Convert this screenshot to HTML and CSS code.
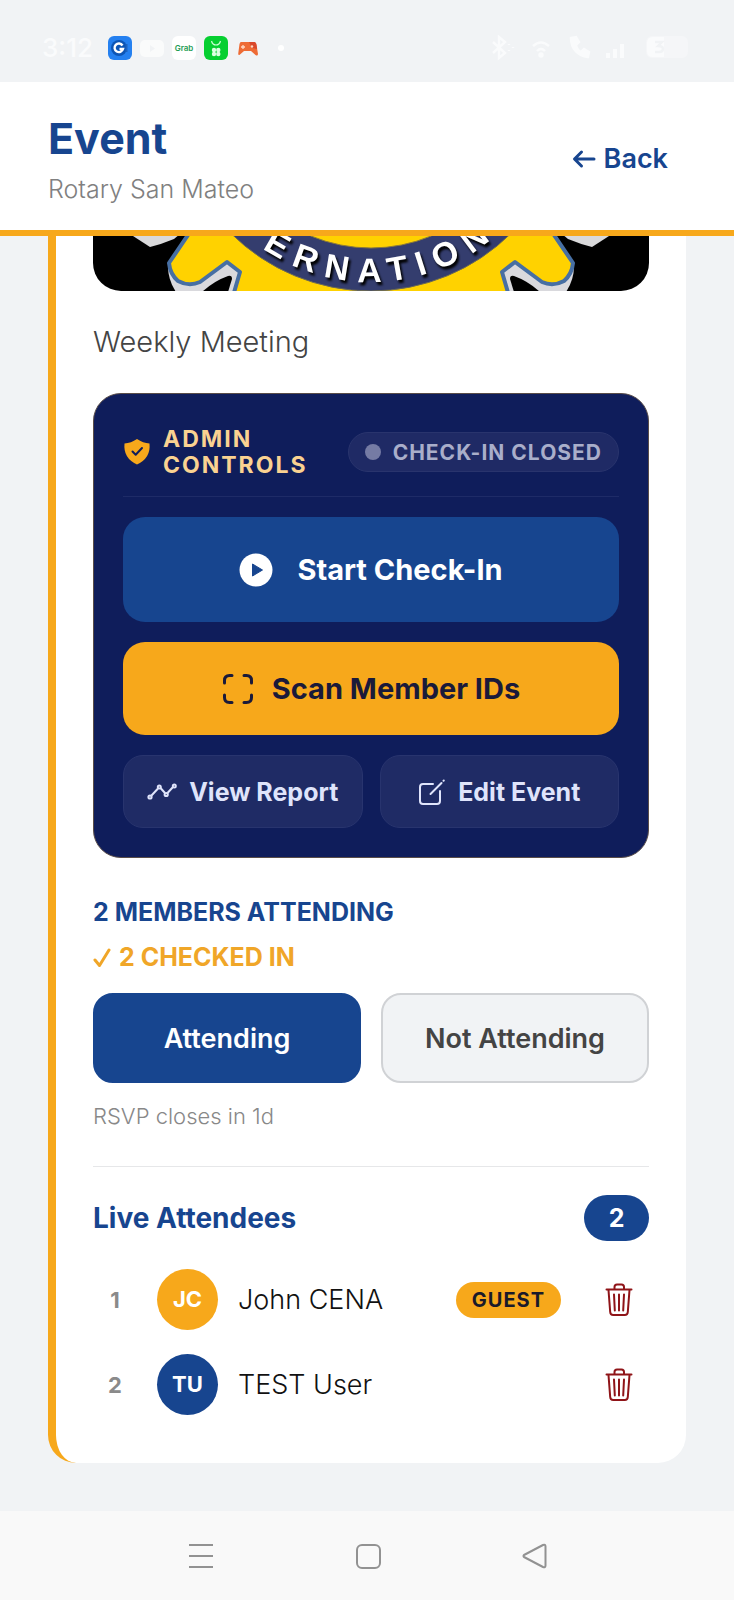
FILE: index.html
```html
<!DOCTYPE html>
<html lang="en">
<head>
    <meta charset="UTF-8">
    <meta name="viewport" content="width=device-width, initial-scale=1.0">
    <title>Event - Rotary San Mateo</title>
    <link rel="stylesheet" href="styles.css">
</head>
<body>

    <!-- Trash icon shared by the attendee rows -->
    <svg class="sprite" width="0" height="0" aria-hidden="true">
        <symbol id="trash" viewBox="0 0 28 34">
            <g fill="none" stroke="#8f1418" stroke-width="2" stroke-linecap="round" stroke-linejoin="round">
                <path d="M1.500 6.500h25"/>
                <path d="M9.500 6V4q0-2.500 2.500-2.500h4.500Q19 1.500 19 4v2"/>
                <path d="M3.500 7l1.700 22q.2 3 3 3h11.600q2.800 0 3-3L24.500 7"/>
                <path d="M9 11.500l.8 16M14 11.500v16M19 11.500l-.8 16"/>
            </g>
        </symbol>
    </svg>

    <div class="status-bar">
        <div class="status-group">
            <span class="clock">3:12</span>
            <svg width="24" height="24" viewBox="0 0 24 24">
                <rect width="24" height="24" rx="6" fill="#2480f0"/>
                <circle cx="11" cy="12" r="8" fill="#0d55b5"/>
                <path d="M14.500 9.500a4.300 4.300 0 1 0 .5 3.500h-3.500" fill="none" stroke="#fff" stroke-width="2.400"/>
                <path d="M18.500 8v8" stroke="#1c63c0" stroke-width="2"/>
            </svg>
            <svg width="24" height="24" viewBox="0 0 24 24">
                <rect y="4" width="24" height="17" rx="5" fill="#fafbfb"/>
                <path d="M10 9l5 3.500-5 3.500z" fill="#f1f3f5"/>
            </svg>
            <span class="grab-icon">Grab</span>
            <svg width="24" height="24" viewBox="0 0 24 24">
                <rect width="24" height="24" rx="6" fill="#06cf31"/>
                <path d="M7.500 5q1 4 4.500 4t4.500-4" fill="none" stroke="#c8ffd2" stroke-width="1.200"/>
                <g fill="#dbffe2">
                    <circle cx="10" cy="14" r="2.200"/><circle cx="14.300" cy="14" r="2.200"/>
                    <circle cx="10" cy="18" r="2.200"/><circle cx="14.300" cy="18" r="2.200"/>
                </g>
            </svg>
            <svg width="24" height="24" viewBox="0 0 24 24">
                <path d="M5 6h13q2 0 2.500 3L22 18q-.3 2.500-2.500 1L15 15H8l-4 3.500Q2 20 2.300 17L3.500 8Q4 6 5 6z" fill="#ee6b35"/>
                <path d="M13 6h5q2 0 2.500 3l.6 4-5-1z" fill="#d9482c"/>
                <path d="M7 9v4M5 11h4" stroke="#ffd9c4" stroke-width="1.300"/>
                <circle cx="16" cy="10.500" r="1.200" fill="#ffd9c4"/>
            </svg>
            <span class="more-dot"></span>
        </div>
        <svg width="200" height="26" viewBox="0 0 200 26" fill="none" stroke="#fafbfc" stroke-width="2.400">
            <path d="M5 7l12 11-6 5V2l6 5L5 18M21 9v1M21 15v1M25 12v1"/>
            <path d="M45 11q8-7 16 0M49 16q4-4 8 0"/>
            <circle cx="53" cy="20" r="1.500" fill="#fafbfc"/>
            <path d="M83 3c0 11 7 18 17 19l1-5-5-3-3 3q-4-2-5-7l3-3-3-5z" fill="#fafbfc"/>
            <path d="M120 23v-5M127 23V14M134 23V9" stroke-width="4"/>
            <rect x="158" y="1" width="42" height="22" rx="6" fill="#f5f6f8" stroke="none"/>
            <path d="M176 2h-11q-6 0-6 6v8q0 6 6 6h11z" fill="#fafbfc" stroke="none"/>
            <path d="M167 7h7l-4 4q5 0 5 3t-4 3h-4" stroke="#f1f3f5"/>
        </svg>
    </div>

    <header class="header">
        <div>
            <h1>Event</h1>
            <p class="club-name">Rotary San Mateo</p>
        </div>
        <button class="back-button">
            <svg width="24" height="20" viewBox="0 0 24 20" fill="none" stroke="#17458f" stroke-width="3" stroke-linecap="round" stroke-linejoin="round">
                <path d="M22 10H3M9.500 3L2.500 10l7 7"/>
            </svg>
            Back
        </button>
    </header>

    <main>
        <article class="card">
            <svg class="hero" viewBox="0 0 556 55" preserveAspectRatio="xMidYMax slice" role="img" aria-label="Rotary International wheel">
                <defs>
                    <path id="ring-line" d="M88-144A190 190 0 0 0 468-144"/>
                    <!-- One cog of the wheel, mirrored for the right side -->
                    <g id="cog">
                        <path d="M40 0l17 11q12-3 24-8l6-5z" fill="#d9d9db"/>
                        <path d="M75 30q0 14 8 26h64V26z" fill="#d9d9dd"/>
                        <path d="M109 56q12-11 26-16 4-1 4 3l-4 13z"/>
                        <path d="M97-4L76 27q1 11 9 18 11 6 22 1l27-20 13 10-7 24h150V-4z" fill="#ffd200" stroke="#476fa3" stroke-width="4" stroke-linejoin="round"/>
                    </g>
                </defs>
                <rect width="556" height="55" fill="#000"/>
                <use href="#cog"/>
                <use href="#cog" transform="translate(556) scale(-1 1)"/>
                <circle cx="278" cy="-144" r="199" fill="#343d6e" stroke="#6b6a55" stroke-width="1"/>
                <circle cx="278" cy="-144" r="156" fill="#ffd200" stroke="#8b7a3a" stroke-width="1"/>
                <text class="ring-text"><textPath href="#ring-line" startOffset="52%" text-anchor="middle">ERNATION</textPath></text>
            </svg>

            <p class="description">Weekly Meeting</p>

            <section class="admin">
                <div class="admin-header">
                    <h2 class="admin-title">
                        <svg width="28" height="28" viewBox="0 0 28 28">
                            <path d="M14 1q6 4 12.500 4.500Q28 20 14 26.500 0 20 1.500 5.500 8 5 14 1z" fill="#f7a81b"/>
                            <path d="M9.500 13.500l3.200 3.200 6.300-6.700" fill="none" stroke="#0f1d5b" stroke-width="2" stroke-linecap="round" stroke-linejoin="round"/>
                        </svg>
                        <span>ADMIN CONTROLS</span>
                    </h2>
                    <span class="status-badge"><span class="status-dot"></span>CHECK-IN CLOSED</span>
                </div>

                <button class="button button-start">
                    <svg width="34" height="34" viewBox="0 0 34 34">
                        <circle cx="17" cy="17" r="16.500" fill="#fff"/>
                        <path d="M13.500 11l10 6-10 6z" fill="#17458f" stroke="#17458f" stroke-linejoin="round"/>
                    </svg>
                    Start Check-In
                </button>

                <button class="button button-scan">
                    <svg width="32" height="32" viewBox="0 0 32 32" fill="none" stroke="#1a1a3a" stroke-width="3" stroke-linecap="round">
                        <path d="M2.500 10V7.500q0-5 5-5H10M22 2.500h2.500q5 0 5 5V10M29.500 22v2.500q0 5-5 5H22M10 29.500H7.500q-5 0-5-5V22"/>
                    </svg>
                    Scan Member IDs
                </button>

                <div class="admin-row">
                    <button class="button button-ghost">
                        <svg width="30" height="28" viewBox="0 0 30 28" fill="none" stroke="#dfe4fb" stroke-width="2">
                            <path d="M4.500 17.500L11 10.500M13.500 10L18 15M20.500 15L26 9"/>
                            <circle cx="3" cy="19" r="1.600"/><circle cx="12.300" cy="9" r="1.500"/><circle cx="19.200" cy="16.500" r="1.600"/><circle cx="27.300" cy="8" r="1.500"/>
                        </svg>
                        View Report
                    </button>
                    <button class="button button-ghost">
                        <svg width="28" height="28" viewBox="0 0 28 28" fill="none" stroke="#dfe4fb" stroke-width="2" stroke-linecap="round" stroke-linejoin="round">
                            <path d="M15 6H5Q2 6 2 9v14q0 3 3 3h14q3 0 3-3V13M12.500 16L23.500 5M25.500 2.800l.3-.3"/>
                        </svg>
                        Edit Event
                    </button>
                </div>
            </section>

            <p class="count">2 MEMBERS ATTENDING</p>
            <p class="count count-checked">
                <svg width="18" height="20" viewBox="0 0 18 20" fill="none" stroke="#f0a628" stroke-width="3" stroke-linecap="round" stroke-linejoin="round">
                    <path d="M2 12l4.500 5.500L16 2"/>
                </svg>
                2 CHECKED IN
            </p>

            <div class="rsvp">
                <button class="rsvp-button rsvp-active">Attending</button>
                <button class="rsvp-button">Not Attending</button>
            </div>
            <p class="rsvp-note">RSVP closes in 1d</p>

            <section class="attendees">
                <div class="attendees-header">
                    <h2>Live Attendees</h2>
                    <span class="attendees-count">2</span>
                </div>
                <ol class="attendee-list">
                    <li class="attendee">
                        <span class="number">1</span>
                        <span class="avatar avatar-guest">JC</span>
                        <span class="name">John CENA</span>
                        <span class="guest-badge">GUEST</span>
                        <button class="delete-button" aria-label="Remove John CENA"><svg width="28" height="34"><use href="#trash"/></svg></button>
                    </li>
                    <li class="attendee">
                        <span class="number">2</span>
                        <span class="avatar">TU</span>
                        <span class="name">TEST User</span>
                        <button class="delete-button" aria-label="Remove TEST User"><svg width="28" height="34"><use href="#trash"/></svg></button>
                    </li>
                </ol>
            </section>
        </article>
    </main>

    <nav class="system-nav">
        <button aria-label="Recent apps">
            <svg width="28" height="28" viewBox="0 0 28 28" fill="none" stroke="#929292" stroke-width="2">
                <path d="M2 3h24M2 14h24M2 25h24"/>
            </svg>
        </button>
        <button aria-label="Home">
            <svg width="28" height="28" viewBox="0 0 28 28" fill="none" stroke="#929292" stroke-width="2">
                <rect x="3" y="3" width="23" height="23" rx="5"/>
            </svg>
        </button>
        <button aria-label="Go back">
            <svg width="28" height="28" viewBox="0 0 28 28" fill="none" stroke="#929292" stroke-width="2" stroke-linejoin="round">
                <path d="M3 13q-1 1 0 2l19 10q2.500 1 2.500-1.500v-19Q24.500 2 22 3z"/>
            </svg>
        </button>
    </nav>

</body>
</html>
```
FILE: styles.css
```css
* {
    box-sizing: border-box;
}

body {
    font-family: Inter, "Liberation Sans", sans-serif;
    margin: 0;
    min-height: 100vh;
    display: flex;
    flex-direction: column;
    background-color: #f1f3f5;
    color: #111;
}

h1, h2, p, ol {
    margin: 0;
    padding: 0;
}

button {
    font-family: inherit;
    border: none;
    padding: 0;
    background: none;
    cursor: pointer;
}

svg {
    display: block;
    flex-shrink: 0;
}

.sprite {
    position: absolute;
}

/* Phone status bar */
.status-bar {
    display: flex;
    justify-content: space-between;
    align-items: center;
    height: 82px;
    padding: 14px 46px 0 42px;
}

.status-group {
    display: flex;
    align-items: center;
    gap: 8px;
}

.clock {
    width: 58px;
    font-size: 26px;
    font-weight: 500;
    line-height: 26px;
    color: #fafbfc;
}

.grab-icon {
    width: 24px;
    border-radius: 6px;
    background-color: #fff;
    color: #1f9d55;
    font-size: 8px;
    font-weight: 600;
    line-height: 24px;
    text-align: center;
}

.more-dot {
    width: 6px;
    height: 6px;
    margin-left: 10px;
    border-radius: 50%;
    background-color: #fff;
}

/* Header */
.header {
    display: flex;
    justify-content: space-between;
    align-items: center;
    padding: 30px 66px 24px 48px;
    background-color: #fff;
    border-bottom: 6px solid #f7a81b;
}

.header h1 {
    font-size: 43px;
    font-weight: 700;
    line-height: 52px;
    color: #17458f;
}

.club-name {
    margin-top: 8px;
    font-size: 25px;
    font-weight: 300;
    line-height: 34px;
    color: #808080;
}

.back-button {
    display: flex;
    align-items: center;
    gap: 8px;
    font-size: 27px;
    font-weight: 600;
    line-height: 34px;
    color: #17458f;
}

main {
    flex: 1;
    padding: 0 48px 48px;
}

.card {
    padding: 0 37px 48px;
    background-color: #fff;
    border-left: 8px solid #f7a81b;
    border-radius: 0 0 28px 28px;
}

.hero {
    width: 100%;
    height: 55px;
    border-radius: 0 0 28px 28px;
}

.ring-text {
    font-family: "Liberation Sans", sans-serif;
    font-size: 34px;
    font-weight: 700;
    letter-spacing: 10px;
    fill: #fff;
    filter: drop-shadow(2px 3px 1px #000);
}

.description {
    padding: 32px 0;
    font-size: 29px;
    font-weight: 300;
    line-height: 38px;
    color: #444;
}

/* Admin panel */
.admin {
    display: flex;
    flex-direction: column;
    gap: 20px;
    padding: 29px;
    background-color: #0f1d5b;
    border: 1px solid #5a4d48;
    border-radius: 28px;
}

.admin-header {
    display: flex;
    justify-content: space-between;
    align-items: center;
    padding: 3px 0 18px;
    border-bottom: 1px solid #1e2b67;
}

.admin-title {
    display: flex;
    align-items: center;
    gap: 12px;
    width: 190px;
    font-size: 23px;
    font-weight: 700;
    line-height: 26px;
    letter-spacing: 2px;
    color: #fad291;
}

.status-badge {
    display: flex;
    align-items: center;
    gap: 12px;
    height: 40px;
    padding: 0 16px;
    border: 1px solid #29346d;
    border-radius: 20px;
    background-color: #1f2a65;
    color: #a9aeca;
    font-size: 21px;
    font-weight: 700;
    letter-spacing: 1px;
    white-space: nowrap;
}

.status-dot {
    width: 16px;
    height: 16px;
    border-radius: 50%;
    background-color: #757ba4;
}

.button {
    display: flex;
    justify-content: center;
    align-items: center;
    font-size: 29px;
    font-weight: 700;
    border-radius: 22px;
}

.button-start {
    gap: 24px;
    height: 105px;
    background-color: #17458f;
    color: #fff;
}

.button-scan {
    gap: 18px;
    height: 93px;
    background-color: #f7a81b;
    color: #1a1a3a;
}

.admin-row {
    display: flex;
    gap: 17px;
}

.button-ghost {
    flex: 1;
    gap: 12px;
    height: 73px;
    border: 1px solid #28346e;
    border-radius: 20px;
    background-color: #1f2b65;
    color: #dfe4fb;
    font-size: 25px;
}

/* Counts */
.count {
    display: flex;
    align-items: center;
    gap: 8px;
    margin-top: 37px;
    font-size: 25px;
    font-weight: 700;
    line-height: 35px;
    color: #17458f;
}

.count-checked {
    margin-top: 10px;
    color: #f0a628;
}

/* RSVP buttons */
.rsvp {
    display: flex;
    gap: 20px;
    margin-top: 18px;
}

.rsvp-button {
    flex: 1;
    height: 90px;
    border: 2px solid #d0d2d5;
    border-radius: 20px;
    background-color: #f1f3f5;
    color: #444;
    font-size: 27px;
    font-weight: 600;
}

.rsvp-active {
    border-color: #17458f;
    background-color: #17458f;
    color: #fff;
}

.rsvp-note {
    padding: 18px 0 35px;
    font-size: 22px;
    font-weight: 300;
    line-height: 30px;
    color: #888;
}

/* Attendees */
.attendees {
    border-top: 1px solid #e6e7e9;
}

.attendees-header {
    display: flex;
    justify-content: space-between;
    align-items: center;
    padding: 28px 0;
}

.attendees-header h2 {
    font-size: 28px;
    font-weight: 700;
    line-height: 34px;
    color: #17458f;
}

.attendees-count {
    width: 65px;
    border-radius: 23px;
    background-color: #17458f;
    color: #fff;
    font-size: 25px;
    font-weight: 700;
    line-height: 46px;
    text-align: center;
}

.attendee-list {
    display: flex;
    flex-direction: column;
    gap: 24px;
    list-style: none;
}

.attendee {
    display: flex;
    align-items: center;
}

.number {
    width: 44px;
    font-size: 22px;
    font-weight: 700;
    color: #8a8a8a;
    text-align: center;
}

.avatar {
    width: 61px;
    margin: 0 20px;
    border-radius: 50%;
    background-color: #17458f;
    color: #fff;
    font-size: 22px;
    font-weight: 700;
    line-height: 61px;
    text-align: center;
}

.avatar-guest {
    background-color: #f7a81b;
}

.name {
    flex: 1;
    font-size: 27px;
    font-weight: 300;
}

.guest-badge {
    padding: 0 16px;
    border-radius: 18px;
    background-color: #f7a81b;
    color: #1a1a2a;
    font-size: 20px;
    font-weight: 700;
    line-height: 36px;
    letter-spacing: 1px;
}

.delete-button {
    margin-left: 28px;
    padding: 8px 16px;
}

/* Phone navigation */
.system-nav {
    display: flex;
    justify-content: center;
    align-items: center;
    gap: 139px;
    height: 90px;
    padding-left: 2px;
    background-color: #f9f9f9;
}
```
